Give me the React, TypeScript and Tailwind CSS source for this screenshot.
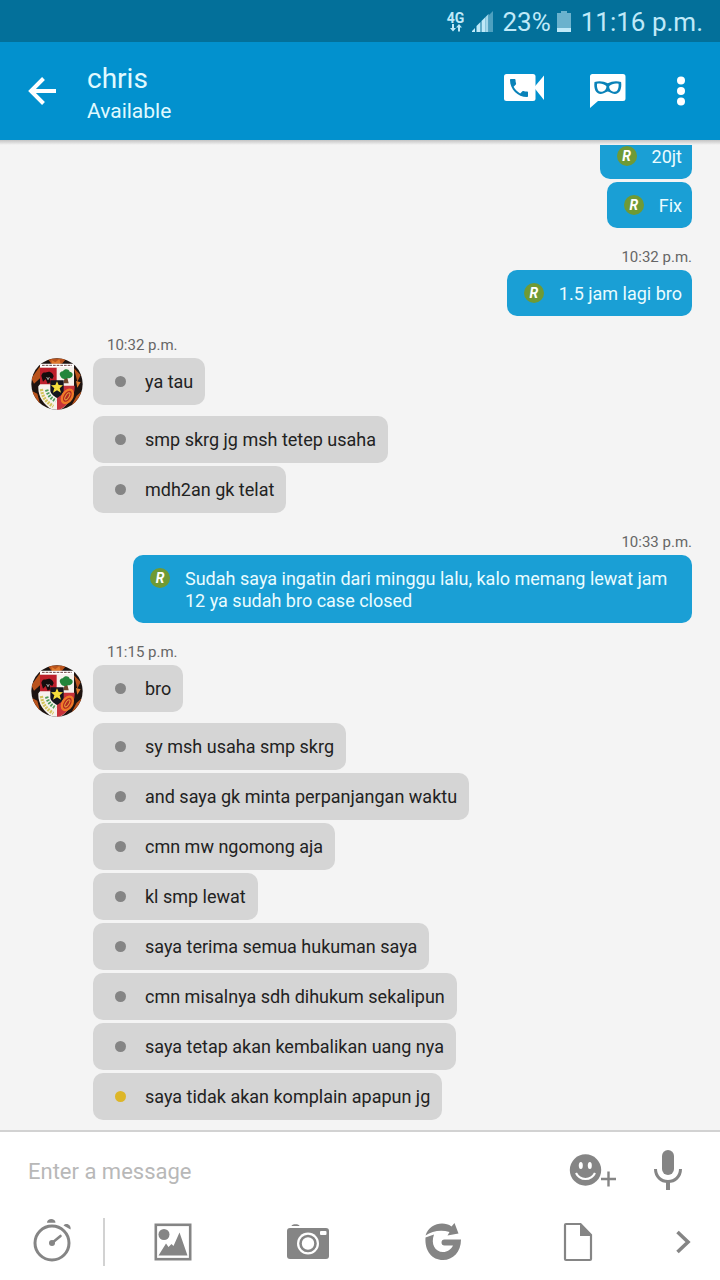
import React from "react";
import clsx from "clsx";

type Status = "read" | "seen" | "pending";

type Message = {
  text: string;
  status: Status;
};

type Group = {
  id: number;
  mine: boolean;
  time?: string;
  messages: Message[];
};

const groups: Group[] = [
  {
    id: 1,
    mine: true,
    messages: [
      { text: "20jt", status: "read" },
      { text: "Fix", status: "read" },
    ],
  },
  {
    id: 2,
    mine: true,
    time: "10:32 p.m.",
    messages: [{ text: "1.5 jam lagi bro", status: "read" }],
  },
  {
    id: 3,
    mine: false,
    time: "10:32 p.m.",
    messages: [
      { text: "ya tau", status: "seen" },
      { text: "smp skrg jg msh tetep usaha", status: "seen" },
      { text: "mdh2an gk telat", status: "seen" },
    ],
  },
  {
    id: 4,
    mine: true,
    time: "10:33 p.m.",
    messages: [
      {
        text: "Sudah saya ingatin dari minggu lalu, kalo memang lewat jam 12 ya sudah bro case closed",
        status: "read",
      },
    ],
  },
  {
    id: 5,
    mine: false,
    time: "11:15 p.m.",
    messages: [
      { text: "bro", status: "seen" },
      { text: "sy msh usaha smp skrg", status: "seen" },
      { text: "and saya gk minta perpanjangan waktu", status: "seen" },
      { text: "cmn mw ngomong aja", status: "seen" },
      { text: "kl smp lewat", status: "seen" },
      { text: "saya terima semua hukuman saya", status: "seen" },
      { text: "cmn misalnya sdh dihukum sekalipun", status: "seen" },
      { text: "saya tetap akan kembalikan uang nya", status: "seen" },
      { text: "saya tidak akan komplain apapun jg", status: "pending" },
    ],
  },
];

const StatusBar: React.FC = () => (
  <div className="flex h-[42px] shrink-0 items-center justify-end bg-[#03709a] pt-[2px] pr-[17px] text-[26px] leading-8 text-[#bfe9f8]">
    <div className="mr-2 flex flex-col items-center">
      <span className="text-sm leading-3 font-bold">4G</span>
      <svg width="12" height="8" viewBox="0 0 12 8" fill="currentColor">
        <path d="M2 0h2v4h2L3 7.500 0 4h2zM8 7.500h2v-4h2L9 0 6 3.500h2z" />
      </svg>
    </div>
    <svg className="mr-2" width="22" height="22" viewBox="0 0 22 22" fill="currentColor">
      <path d="M0 21v-1l3-3v4zM4.500 21v-6l4-4V21zM9.500 21V10l4-4v15z" />
      <path d="M13.500 21V6l3-3v18z" opacity=".85" />
      <path d="M17 21V4l4-4v21z" opacity=".4" />
    </svg>
    <span>23%</span>
    <svg className="mr-[10px] ml-[6px]" width="14" height="22" viewBox="0 0 14 22" fill="currentColor">
      <path d="M0 2h4V0h6v2h4v15H0z" opacity=".55" />
      <path d="M0 17h14v4H0z" />
    </svg>
    <span>11:16 p.m.</span>
  </div>
);

const Header: React.FC = () => (
  <header className="flex h-[98px] shrink-0 items-center gap-[46px] bg-[#0291ce] pr-8 pl-7 text-white">
    <div className="flex flex-1 items-center gap-[31px]">
      <button aria-label="Back">
        <svg width="28" height="28" viewBox="0 0 28 28" fill="none" stroke="currentColor" strokeWidth="4">
          <path d="M28 14H3M15.500 1.500 3 14l12.500 12.500" />
        </svg>
      </button>
      <div className="pt-[3px] text-[#e0faff]">
        <h1 className="text-[28px] leading-9">chris</h1>
        <p className="text-[21px] leading-7">Available</p>
      </div>
    </div>
    <button aria-label="Video call">
      <svg width="40" height="34" viewBox="0 0 40 34" fill="currentColor">
        <rect width="31.500" height="27" rx="2.500" />
        <path d="M30 13.500 40 1.500v24.500z" />
        <path
          d="M6.620 10.790c1.440 2.830 3.760 5.140 6.590 6.590l2.200-2.200c.27-.27.67-.36 1.020-.24 1.120.37 2.330.57 3.570.57.55 0 1 .45 1 1V20c0 .55-.45 1-1 1-9.390 0-17-7.610-17-17 0-.55.45-1 1-1h3.500c.55 0 1 .45 1 1 0 1.250.2 2.450.57 3.570.11.35.03.74-.25 1.020l-2.200 2.200z"
          transform="translate(3 2)"
          fill="#0a82b8"
        />
      </svg>
    </button>
    <button aria-label="Private chat">
      <svg width="36" height="34" viewBox="0 0 36 34" fill="currentColor">
        <path d="M2.500 0h30.500a2.500 2.500 0 0 1 2.500 2.500v22a2.500 2.500 0 0 1-2.500 2.500H8l-8 7V2.500A2.500 2.500 0 0 1 2.500 0z" />
        <path
          d="M4.500 8c4.500-1.600 9.500-.8 13.300 1.200 3.800-2 8.800-2.800 13.300-1.200 1 7-1.500 12-6.300 12-3.300 0-5-2.500-7-2.500s-3.700 2.500-7 2.500C6 20 3.500 15 4.500 8z"
          fill="#0a82b8"
        />
        <path d="M7 9.800c3.600-.8 7 .2 9.300 2.200.6 2.800-1.800 5.800-5.300 5.800-3 0-4.300-3.400-4-8zM28.600 9.800c-3.600-.8-7 .2-9.300 2.200-.6 2.800 1.800 5.800 5.300 5.800 3 0 4.300-3.400 4-8z" />
      </svg>
    </button>
    <button aria-label="More options">
      <svg width="16" height="34" viewBox="0 0 16 34" fill="currentColor">
        <circle cx="9" cy="6.500" r="4" />
        <circle cx="9" cy="17" r="4" />
        <circle cx="9" cy="27.500" r="4" />
      </svg>
    </button>
  </header>
);

const Avatar: React.FC<{ id: string }> = ({ id }) => (
  <svg className="shrink-0" width="52" height="52" viewBox="9 9 156 156" role="img" aria-label="chris">
    <defs>
      <clipPath id={id}>
        <circle cx="87" cy="87" r="77" />
      </clipPath>
    </defs>
    <g clipPath={`url(#${id})`}>
      <rect x="9" y="9" width="156" height="156" fill="#1d1310" />
      <path d="M10 70 36 34v36l-18 16zM58 10h58l-14 16H70zM138 40l20 20-10 20zM12 108l16 8 8 30-22-18zM146 122l16-14-14 34-20 14z" fill="#b9531c" />
      <path d="M70 14l12 8 12-10 4 14H72zM144 78l14 4-10 16z" fill="#e07a2c" />
      <path d="M36 28h102v68c2 28-20 56-51 76-36-16-58-44-56-78l5-6z" fill="#f6f1ec" />
      <path d="M36 38h50v50H36z" fill="#bd1f2b" />
      <path d="M87 92h53c2 34-22 60-53 78z" fill="#c8323a" />
      <path d="M36 26h102v10H36z" fill="#fff" />
      <path d="M42 31h90" stroke="#6a4040" strokeWidth="3" strokeDasharray="8 3" />
      <path d="M40 62c4-14 12-8 16-10 8-6 20 2 21 12l-4 8-8-4 2 14-8 4-6-14-8 8z" fill="#130d0d" />
      <path d="M56 66l4 8 4-8" fill="none" stroke="#eee" strokeWidth="2" />
      <path d="M110 68h8l4 17h-16z" fill="#70452a" />
      <path d="M97 63c-5-8 2-15 8-14 4-8 17-8 20 1 9 1 12 10 6 16-6 6-14 3-17 5-6 3-14 0-17-8z" fill="#23853a" />
      <path d="M67 76h40v30c0 10-9 17-20 23-11-6-20-13-20-23z" fill="#15151d" />
      <path d="M87 79l5 11 13 1-10 9 4 13-12-7-12 7 4-13-10-9 13-1z" fill="#f5dd3c" />
      <path d="M40 102c4 26 16 40 36 52" fill="none" stroke="#d4c45b" strokeWidth="10" strokeDasharray="6 3" />
      <path d="M56 104c4 16 12 26 28 34" fill="none" stroke="#4c9b58" strokeWidth="10" strokeDasharray="5 4" />
      <ellipse cx="118" cy="124" rx="14" ry="22" transform="rotate(32 118 124)" fill="#b52a22" stroke="#ef7a28" strokeWidth="7" />
      <ellipse cx="118" cy="124" rx="5" ry="12" transform="rotate(32 118 124)" fill="none" stroke="#e8a23c" strokeWidth="3" />
    </g>
  </svg>
);

const StatusIcon: React.FC<{ status: Status }> = ({ status }) => {
  if (status === "read") {
    return (
      <span className="flex size-5 items-center justify-center rounded-full bg-[#6f9a35] text-sm font-bold text-white italic">
        R
      </span>
    );
  }
  return (
    <span
      className={clsx(
        "size-[11px] rounded-full",
        status === "pending" ? "bg-[#ddb628]" : "bg-[#858585]"
      )}
    />
  );
};

const Bubble: React.FC<{ message: Message; mine: boolean }> = ({ message, mine }) => (
  <div
    className={clsx(
      "flex max-w-[559px] gap-[14px] rounded-[10px] pt-3 pb-[11px] pl-4 text-lg leading-[22px]",
      mine
        ? "min-h-[46px] bg-[#1a9fd5] pr-[10px] text-[#eafcff]"
        : "min-h-[47px] bg-[#d5d5d5] pr-3 text-[#222222]"
    )}
  >
    <span className="flex h-[22px] w-[22px] shrink-0 items-center justify-center">
      <StatusIcon status={message.status} />
    </span>
    <p className="pt-px">{message.text}</p>
  </div>
);

const MessageGroup: React.FC<{ group: Group }> = ({ group }) => (
  <section className="shrink-0">
    {group.time && (
      <p
        className={clsx(
          "pt-[19px] pb-[3px] text-[15px] leading-5 text-[#666666]",
          group.mine ? "text-right" : "pl-[107px]"
        )}
      >
        {group.time}
      </p>
    )}
    <div className="flex flex-col gap-[3px]">
      {group.messages.map((message, i) => (
        <div
          key={message.text}
          className={clsx(
            "flex items-start",
            group.mine ? "justify-end" : "pl-[31px]",
            !group.mine && i === 0 && "min-h-[55px]"
          )}
        >
          {!group.mine && (
            <div className="mr-[10px] w-[52px] shrink-0">
              {i === 0 && <Avatar id={`avatar-${group.id}`} />}
            </div>
          )}
          <Bubble message={message} mine={group.mine} />
        </div>
      ))}
    </div>
  </section>
);

const Composer: React.FC = () => (
  <footer className="shrink-0 border-t-2 border-[#d2d2d2] bg-white pb-1 text-[#858585]">
    <div className="flex h-[76px] items-center pr-[37px] pl-7">
      <input
        type="text"
        aria-label="Enter a message"
        placeholder="Enter a message"
        className="min-w-0 flex-1 pt-[3px] text-[22px] leading-8 text-[#222222] outline-none placeholder:text-[#b8b8b8]"
      />
      <button aria-label="Add emoji" className="mr-9">
        <svg width="48" height="36" viewBox="0 0 48 36">
          <circle cx="16.500" cy="18" r="15.700" fill="currentColor" />
          <ellipse cx="11.800" cy="13.500" rx="2" ry="3.600" fill="#fff" />
          <ellipse cx="20.800" cy="13.500" rx="2" ry="3.600" fill="#fff" />
          <path d="M7 21c4 8 15 8 19 0" fill="none" stroke="#fff" strokeWidth="2.200" />
          <path d="M39.500 19.500v15M32 27h15" stroke="currentColor" strokeWidth="2.400" />
        </svg>
      </button>
      <button aria-label="Record voice">
        <svg width="30" height="42" viewBox="0 0 30 42" fill="none" stroke="currentColor">
          <rect x="9" y="1" width="12" height="25" rx="6" fill="currentColor" stroke="none" />
          <path d="M2.500 20c0 7.500 5.500 12.500 12.500 12.500S27.500 27.500 27.500 20" strokeWidth="3" />
          <path d="M15 32v9" strokeWidth="4" />
        </svg>
      </button>
    </div>
    <div className="flex h-[68px] items-center">
      <div className="flex h-12 w-[105px] items-center justify-center border-r-2 border-[#d2d2d2]">
        <button aria-label="Timed message">
          <svg width="40" height="48" viewBox="0 0 40 48" fill="none" stroke="currentColor">
            <circle cx="20" cy="25" r="17" strokeWidth="3" />
            <path d="M15 4.800c0-5 8.500-5 8.500 0z" fill="currentColor" stroke="none" />
            <path d="M31.500 7.500c3-3.500 8-.5 7 4z" fill="currentColor" stroke="none" />
            <path d="M20 25l8.500-7" strokeWidth="2.600" strokeLinecap="round" />
            <circle cx="20" cy="25" r="3" fill="currentColor" stroke="none" />
          </svg>
        </button>
      </div>
      <button aria-label="Send picture" className="flex flex-1 justify-center">
        <svg width="38" height="38" viewBox="0 0 38 38" fill="currentColor">
          <rect x="1.800" y="1.800" width="34.400" height="34.400" fill="none" stroke="currentColor" strokeWidth="2.600" />
          <circle cx="10" cy="11.500" r="5.500" />
          <path d="M4.500 32.500 12 20.500l2.500 3.500 3-3 2 2 6-13.500 8 23z" />
        </svg>
      </button>
      <button aria-label="Open camera" className="flex flex-1 justify-center">
        <svg width="44" height="44" viewBox="0 0 44 44" fill="currentColor">
          <path d="M5.500 6c0-2.500 8-2.500 8 0z" />
          <rect x="1" y="8" width="42" height="31" rx="3" />
          <circle cx="22" cy="23.500" r="11" fill="#fff" />
          <circle cx="22" cy="23.500" r="7.500" fill="none" stroke="currentColor" strokeWidth="2.600" />
          <rect x="34" y="11" width="6.500" height="4" rx="1" fill="#fff" />
        </svg>
      </button>
      <button aria-label="Glympse" className="flex flex-1 justify-center">
        <svg width="40" height="40" viewBox="0 0 40 40" fill="currentColor">
          <path d="M2.500 15.500C1.500 29 9 38 20 38c10 0 18-8 18-20.500H21.500a3 3 0 0 0 0 6H30C28 27.500 24.500 30 20 30c-8 0-12.500-8-9-17.500z" />
          <path d="M2.500 13.500C6 2 20-1.500 28.500 4.500L31.500 1 35.500 11.500 24.500 13.500 26.500 10C18 7.500 9 9 2.500 13.500z" />
        </svg>
      </button>
      <button aria-label="Attach file" className="flex flex-1 justify-center">
        <svg width="30" height="40" viewBox="0 0 30 40" fill="currentColor">
          <path
            d="M2 3a1 1 0 0 1 1-1h14.500L28 13v24a1 1 0 0 1-1 1H3a1 1 0 0 1-1-1z"
            fill="none"
            stroke="currentColor"
            strokeWidth="2.200"
          />
          <path d="M17 2v12h11.500z" />
        </svg>
      </button>
      <button aria-label="More tools" className="flex w-[75px] justify-center">
        <svg width="16" height="24" viewBox="0 0 16 24" fill="none" stroke="currentColor" strokeWidth="3.600">
          <path d="M2.500 2 13 12 2.500 22" />
        </svg>
      </button>
    </div>
  </footer>
);

const App: React.FC = () => {
  return (
    <div className="flex h-screen flex-col bg-[#f4f4f4] font-['Roboto',sans-serif]">
      <StatusBar />
      <Header />
      <div className="h-[5px] shrink-0 bg-gradient-to-b from-[#c4c4c4] to-[#f4f4f4]" />
      <main className="flex min-h-0 flex-1 flex-col justify-end overflow-hidden pr-7 pb-[10px]">
        {groups.map((group) => (
          <MessageGroup key={group.id} group={group} />
        ))}
      </main>
      <Composer />
    </div>
  );
};

export default App;
